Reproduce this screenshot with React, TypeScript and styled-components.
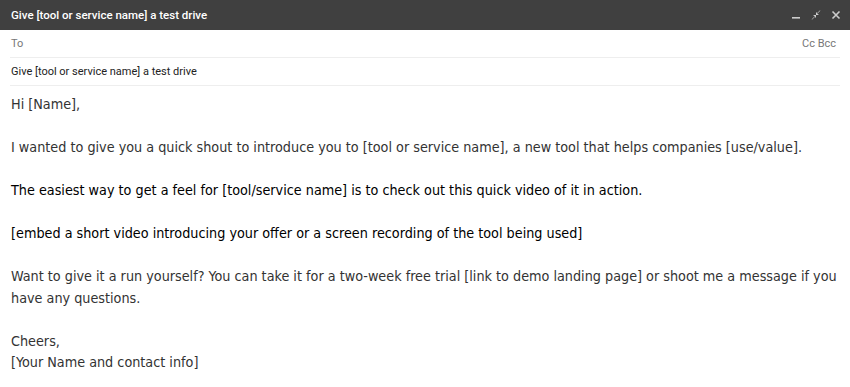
import React from 'react';
import styled, { createGlobalStyle } from 'styled-components';

const GlobalStyle = createGlobalStyle`
	html, body {
		margin: 0;
		padding: 0;
		background: #ffffff;
	}
`;

const Window = styled.div`
	width: 850px;
	height: 387px;
	background: #ffffff;
	overflow: hidden;
`;

const TitleBar = styled.header`
	height: 30px;
	background: #404040;
	display: flex;
	align-items: center;
	justify-content: space-between;
	padding: 0 9px 0 11px;
	box-sizing: border-box;
`;

const Title = styled.h1`
	margin: 0;
	font-family: Roboto, 'Liberation Sans', sans-serif;
	font-weight: 500;
	font-size: 11.5px;
	color: #ffffff;
`;

const Controls = styled.div`
	display: flex;
	align-items: center;
	column-gap: 10px;
`;

const ControlButton = styled.span`
	width: 10px;
	height: 10px;
	display: flex;
	align-items: center;
	justify-content: center;
	svg {
		display: block;
	}
`;

const Field = styled.div`
	height: 28px;
	margin: 0 10px;
	border-bottom: 1px solid #eeeeee;
	display: flex;
	align-items: center;
	justify-content: space-between;
	padding: 0 4px 0 1px;
	box-sizing: border-box;
	font-family: Roboto, 'Liberation Sans', sans-serif;
	font-size: 11px;
	color: ${({ muted }: { muted?: boolean }) => (muted ? '#777777' : '#222222')};
`;

const Body = styled.div`
	padding: 8px 5px 0 11px;
	font-family: 'DejaVu Sans Condensed', 'DejaVu Sans', Verdana, sans-serif;
	font-size: 14.25px;
	line-height: 21.5px;
	color: #333333;
`;

const Para = styled.p`
	margin: 0 0 21.5px 0;
	color: ${({ strong }: { strong?: boolean }) => (strong ? '#000000' : 'inherit')};
`;

const App = () => {
	return (
		<Window>
			<GlobalStyle />
			<TitleBar>
				<Title>Give [tool or service name] a test drive</Title>
				<Controls>
					<ControlButton>
						<svg width='10' height='10' viewBox='0 0 10 10'>
							<rect x='1' y='7' width='8' height='1.6' fill='#cccccc' />
						</svg>
					</ControlButton>
					<ControlButton>
						<svg width='10' height='10' viewBox='0 0 10 10' fill='#cccccc'>
							<polygon points='0.5,9.5 4,6 2.6,6 2.6,5 5,5 5,7.4 4,7.4 4,6.7 1.2,9.5' />
							<polygon points='9.5,0.5 6,4 7.4,4 7.4,5 5,5 5,2.6 6,2.6 6,3.3 8.8,0.5' />
						</svg>
					</ControlButton>
					<ControlButton>
						<svg width='10' height='10' viewBox='0 0 10 10'>
							<path d='M1.5 1.5 L8.5 8.5 M8.5 1.5 L1.5 8.5' stroke='#cccccc' strokeWidth='1.6' />
						</svg>
					</ControlButton>
				</Controls>
			</TitleBar>
			<Field muted>
				<span>To</span>
				<span>Cc Bcc</span>
			</Field>
			<Field>
				<span>Give [tool or service name] a test drive</span>
			</Field>
			<Body>
				<Para>Hi [Name],</Para>
				<Para>
					I wanted to give you a quick shout to introduce you to [tool or service name], a new tool that helps companies [use/value].
				</Para>
				<Para strong>The easiest way to get a feel for [tool/service name] is to check out this quick video of it in action.</Para>
				<Para strong>[embed a short video introducing your offer or a screen recording of the tool being used]</Para>
				<Para>
					Want to give it a run yourself? You can take it for a two-week free trial [link to demo landing page] or shoot me a message if you have any questions.
				</Para>
				<Para>
					Cheers,
					<br />
					[Your Name and contact info]
				</Para>
			</Body>
		</Window>
	);
};

export default App;
